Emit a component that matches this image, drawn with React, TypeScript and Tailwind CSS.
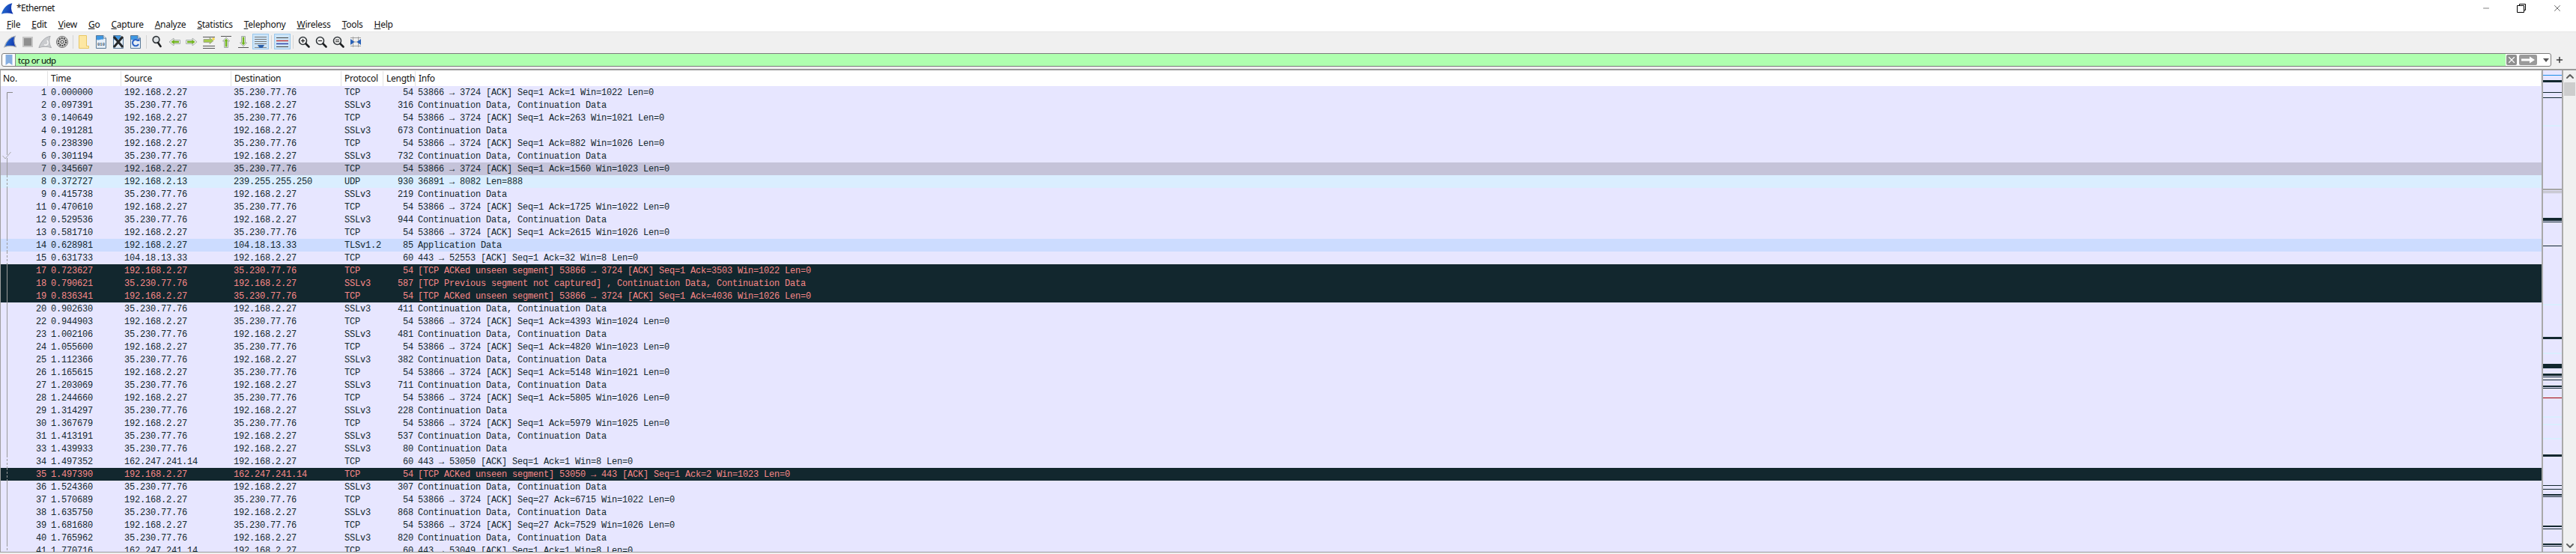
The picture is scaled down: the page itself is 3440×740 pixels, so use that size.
import type { ReactNode } from "react";
import { ChevronDown, ChevronUp, Minus, Plus, X } from "lucide-react";

type Mark = "none" | "first" | "line" | "dash" | "check";
type Tone = "tcp" | "udp" | "tls" | "sel" | "bad";
type Packet = { no: number; time: string; src: string; dst: string; proto: string; len: number; info: string; tone?: Tone; mark?: Mark };

const HOST = "192.168.2.27";
const PEER = "35.230.77.76";
const CC = "Continuation Data, Continuation Data";
const C = "Continuation Data";

const ack = (seq: number, a: number, win: number) => `53866 → 3724 [ACK] Seq=${seq} Ack=${a} Win=${win} Len=0`;
const up = (no: number, time: string, seq: number, a: number, win: number): Packet => ({ no, time, src: HOST, dst: PEER, proto: "TCP", len: 54, info: ack(seq, a, win) });
const down = (no: number, time: string, len: number, info: string): Packet => ({ no, time, src: PEER, dst: HOST, proto: "SSLv3", len, info });

const packets: Packet[] = [
  { ...up(1, "0.000000", 1, 1, 1022), mark: "first" },
  down(2, "0.097391", 316, CC),
  up(3, "0.140649", 1, 263, 1021),
  down(4, "0.191281", 673, C),
  up(5, "0.238390", 1, 882, 1026),
  { ...down(6, "0.301194", 732, CC), mark: "check" },
  { ...up(7, "0.345607", 1, 1560, 1023), tone: "sel" },
  { no: 8, time: "0.372727", src: "192.168.2.13", dst: "239.255.255.250", proto: "UDP", len: 930, info: "36891 → 8082 Len=888", tone: "udp", mark: "dash" },
  down(9, "0.415738", 219, C),
  up(11, "0.470610", 1, 1725, 1022),
  down(12, "0.529536", 944, CC),
  up(13, "0.581710", 1, 2615, 1026),
  { no: 14, time: "0.628981", src: HOST, dst: "104.18.13.33", proto: "TLSv1.2", len: 85, info: "Application Data", tone: "tls", mark: "dash" },
  { no: 15, time: "0.631733", src: "104.18.13.33", dst: HOST, proto: "TCP", len: 60, info: "443 → 52553 [ACK] Seq=1 Ack=32 Win=8 Len=0", mark: "dash" },
  { ...up(17, "0.723627", 1, 3503, 1022), info: `[TCP ACKed unseen segment] ${ack(1, 3503, 1022)}`, tone: "bad" },
  { ...down(18, "0.790621", 587, `[TCP Previous segment not captured] , ${CC}`), tone: "bad" },
  { ...up(19, "0.836341", 1, 4036, 1026), info: `[TCP ACKed unseen segment] ${ack(1, 4036, 1026)}`, tone: "bad" },
  down(20, "0.902630", 411, CC),
  up(22, "0.944903", 1, 4393, 1024),
  down(23, "1.002106", 481, CC),
  up(24, "1.055600", 1, 4820, 1023),
  down(25, "1.112366", 382, CC),
  up(26, "1.165615", 1, 5148, 1021),
  down(27, "1.203069", 711, CC),
  up(28, "1.244660", 1, 5805, 1026),
  down(29, "1.314297", 228, C),
  up(30, "1.367679", 1, 5979, 1025),
  down(31, "1.413191", 537, CC),
  down(33, "1.439933", 80, C),
  { no: 34, time: "1.497352", src: "162.247.241.14", dst: HOST, proto: "TCP", len: 60, info: "443 → 53050 [ACK] Seq=1 Ack=1 Win=8 Len=0", mark: "dash" },
  { no: 35, time: "1.497390", src: HOST, dst: "162.247.241.14", proto: "TCP", len: 54, info: "[TCP ACKed unseen segment] 53050 → 443 [ACK] Seq=1 Ack=2 Win=1023 Len=0", tone: "bad", mark: "dash" },
  down(36, "1.524360", 307, CC),
  up(37, "1.570689", 27, 6715, 1022),
  down(38, "1.635750", 868, CC),
  up(39, "1.681680", 27, 7529, 1026),
  down(40, "1.765962", 820, CC),
  { no: 41, time: "1.770716", src: "162.247.241.14", dst: HOST, proto: "TCP", len: 60, info: "443 → 53049 [ACK] Seq=1 Ack=1 Win=8 Len=0", mark: "dash" },
];

const toneClass: Record<Tone, string> = {
  tcp: "bg-[#e7e6ff] text-[#12272e]",
  udp: "bg-[#daeeff] text-[#12272e]",
  tls: "bg-[#ccdcff] text-[#12272e]",
  sel: "bg-[#c5c3d9] text-[#12272e]",
  bad: "bg-[#12272e] text-[#f78787]",
};

const menus: [string, string][] = [
  ["F", "ile"], ["E", "dit"], ["V", "iew"], ["G", "o"], ["C", "apture"], ["A", "nalyze"],
  ["S", "tatistics"], ["T", "elephony"], ["W", "ireless"], ["T", "ools"], ["H", "elp"],
];

const columns = "grid grid-cols-[63px_98px_147px_147px_56px_43px_1fr]";

// [y, height, colour] of the marks in the packet minimap, relative to its top
const minimapMarks: [number, number, string][] = [
  [6, 1, "#1a8fe8"], [13, 3, "#12272e"], [29, 1, "#12272e"], [36, 1, "#12272e"], [73, 2, "#daeeff"],
  [158, 2, "#a5a5a5"], [161, 1, "#b5b5b5"], [163, 1, "#b5b5b5"], [197, 4, "#12272e"], [202, 1, "#12272e"],
  [234, 1, "#12272e"], [312, 2, "#daeeff"], [356, 3, "#12272e"], [377, 2, "#daeeff"], [392, 6, "#12272e"],
  [405, 3, "#12272e"], [409, 1, "#12272e"], [413, 1, "#12272e"], [421, 2, "#12272e"], [424, 1, "#12272e"],
  [437, 1, "#a40000"], [462, 2, "#daeeff"], [472, 2, "#daeeff"], [491, 2, "#daeeff"], [513, 3, "#12272e"],
  [554, 1, "#12272e"], [559, 1, "#12272e"], [566, 2, "#12272e"], [569, 1, "#12272e"], [608, 2, "#12272e"],
  [612, 1, "#12272e"], [632, 2, "#12272e"], [635, 1, "#12272e"],
];

const FIN_PATH = "M1 18.5C4 10 9 3 18 1.5C15.5 7 16 13 19.5 18.5C13 16.5 7 16.5 1 18.5Z";

function Fin({ size = 20, outline = false }: { size?: number; outline?: boolean }) {
  const id = outline ? "finA" : "finB";
  return (
    <svg width={size} height={size} viewBox="0 0 20 20">
      <defs>
        <linearGradient id={id} x1="0" y1="0" x2="1" y2="0.3">
          <stop offset="0" stopColor="#2a7ad8" />
          <stop offset="1" stopColor="#1238b0" />
        </linearGradient>
      </defs>
      <path d={FIN_PATH} fill={`url(#${id})`} stroke={outline ? "#a6acb4" : "none"} strokeWidth={outline ? 1.4 : 0} />
    </svg>
  );
}

function Doc({ children }: { children: ReactNode }) {
  return (
    <svg width="18" height="18" viewBox="0 0 18 18">
      <path d="M2.5 0.5H12L15.5 4V17.5H2.5Z" fill="#e6eef7" stroke="#5a7a98" />
      <path d="M3 1H12V6C9 4.5 6 7.5 3 6Z" fill="#3f97e2" />
      <path d="M12 0.5V4H15.5" fill="#fff" stroke="#5a7a98" />
      {children}
    </svg>
  );
}

function Glass({ kind }: { kind: "find" | "in" | "out" | "fit" }) {
  if (kind === "find") {
    return (
      <svg width="20" height="20" viewBox="0 0 20 20" fill="none">
        <circle cx="8.5" cy="7" r="4.3" fill="#dfe3e6" stroke="#33383c" strokeWidth="1.7" />
        <path d="M11 11L14.5 16" stroke="#1d1f21" strokeWidth="2.6" strokeLinecap="round" />
      </svg>
    );
  }
  return (
    <svg width="20" height="20" viewBox="0 0 20 20" fill="none">
      <circle cx="8.5" cy="8.5" r="5" fill="#f4f4f4" stroke="#33383c" strokeWidth="1.6" />
      <path d="M12.5 12.5L16.5 16.5" stroke="#1d1f21" strokeWidth="2.6" strokeLinecap="round" />
      {kind !== "fit" && <path d="M6 8.5H11" stroke="#222" strokeWidth="1.2" />}
      {kind === "in" && <path d="M8.5 6V11" stroke="#222" strokeWidth="1.2" />}
      {kind === "fit" && <path d="M6 7.3H11M6 9.7H11" stroke="#222" strokeWidth="1" />}
    </svg>
  );
}

function Arrow({ dir }: { dir: "left" | "right" }) {
  return (
    <svg width="18" height="12" viewBox="0 0 18 12">
      <g transform={dir === "left" ? "" : "matrix(-1 0 0 1 18 0)"}>
        <path d="M2 6L8 1V3.5H16.5V8.5H8V11Z" fill="#eef1e8" stroke="#a8aeae" strokeLinejoin="round" />
        <path d="M4.5 6L8.5 3V4.8H15V7.2H8.5V9Z" fill="#6fb31c" />
      </g>
    </svg>
  );
}

function Vertical({ dir }: { dir: "top" | "bottom" }) {
  return (
    <svg width="20" height="20" viewBox="0 0 20 20">
      {dir === "top" ? (
        <>
          <path d="M3 2.5H17" stroke="#555" />
          <path d="M10 4L14.5 9H12.5V17.5H7.5V9H5.5Z" fill="#eef1e8" stroke="#a2a8a8" />
          <path d="M10 5.5L12.5 9H11.2V16.5H8.8V9H7.5Z" fill="#6fb31c" />
        </>
      ) : (
        <>
          <path d="M3 17.5H17" stroke="#555" />
          <path d="M10 16L14.5 11H12.5V2.5H7.5V11H5.5Z" fill="#eef1e8" stroke="#a2a8a8" />
          <path d="M10 14.5L12.5 11H11.2V3.5H8.8V11H7.5Z" fill="#6fb31c" />
        </>
      )}
    </svg>
  );
}

function Tool({ children, on }: { children: ReactNode; on?: boolean }) {
  return (
    <div className="flex h-[21px] w-[23px] shrink-0 items-center justify-center">
      <div className={`flex h-[21px] w-[22px] items-center justify-center ${on ? "border border-[#99c9ef] bg-[#cce4f7]" : ""}`}>{children}</div>
    </div>
  );
}

const Sep = () => (
  <div className="flex w-[6px] shrink-0 justify-center">
    <div className="h-[18px] w-px bg-[#d4d4d4]" />
  </div>
);

function Toolbar() {
  return (
    <div className="flex h-[26px] shrink-0 items-center border-t border-[#e6e6e6] bg-[#f0f0f0] pl-[2px]">
      <Tool><Fin size={17} outline /></Tool>
      <Tool>
        <svg width="20" height="20" viewBox="0 0 20 20"><rect x="4" y="4" width="12" height="12" fill="#8f8f8f" stroke="#c6c6c6" strokeWidth="2" /></svg>
      </Tool>
      <Tool>
        <svg width="18" height="18" viewBox="0 0 20 20">
          <path d={FIN_PATH} fill="#c9cbce" stroke="#a4a6a9" />
          <path d="M13 8A3.4 3.4 0 1 1 9 14" fill="none" stroke="#f8f8f8" strokeWidth="1.7" />
        </svg>
      </Tool>
      <Tool>
        <svg width="18" height="18" viewBox="0 0 18 18">
          <circle cx="9" cy="9" r="7.5" fill="#dcdcdc" stroke="#6b6b6b" />
          <circle cx="9" cy="9" r="5" fill="none" stroke="#3f3f3f" strokeWidth="2.2" strokeDasharray="2 1.1" />
          <circle cx="9" cy="9" r="2" fill="#f0f0f0" stroke="#333" />
        </svg>
      </Tool>
      <Sep />
      <Tool>
        <svg width="16" height="18" viewBox="0 0 16 18">
          <path d="M1.5 0.5H11.5V14.5H14.5V17.5H1.5Z" fill="#fde7a3" stroke="#e8c765" />
        </svg>
      </Tool>
      <Tool>
        <Doc>
          <text x="9" y="13.5" textAnchor="middle" fontSize="5.5" fontWeight="700" fontFamily="Liberation Mono, monospace" fill="#44586a">010</text>
        </Doc>
      </Tool>
      <Tool>
        <Doc>
          <path d="M3 2L15 16M15 2L3 16" stroke="#26282a" strokeWidth="3" />
        </Doc>
      </Tool>
      <Tool>
        <Doc>
          <path d="M12.5 7.5A4.2 4.2 0 1 0 13 12" fill="none" stroke="#2a62c4" strokeWidth="2" />
          <path d="M10 8H14.5V3.5Z" fill="#2a62c4" />
        </Doc>
      </Tool>
      <Sep />
      <Tool><Glass kind="find" /></Tool>
      <Tool><Arrow dir="left" /></Tool>
      <Tool><Arrow dir="right" /></Tool>
      <Tool>
        <svg width="20" height="20" viewBox="0 0 20 20">
          <path d="M2 3.5H18M2 15.5H18M2 18.5H18" stroke="#555" />
          <path d="M16 8.5L11 4.5V6.5H3V10.5H11V12.5Z" fill="#a5cc4d" stroke="#a3a890" />
          <circle cx="16" cy="6" r="1.8" fill="#f2d64b" />
        </svg>
      </Tool>
      <Tool><Vertical dir="top" /></Tool>
      <Tool><Vertical dir="bottom" /></Tool>
      <Tool on>
        <svg width="18" height="18" viewBox="0 0 18 18">
          <path d="M1 2.5H17M1 5.5H17M1 8.5H17M1 11.5H17" stroke="#777" />
          <path d="M1 16.5H17" stroke="#888" />
          <path d="M5 13H14L11.5 17H7.5Z" fill="#2a5fa8" />
        </svg>
      </Tool>
      <Sep />
      <Tool on>
        <svg width="18" height="18" viewBox="0 0 18 18">
          <path d="M1 3.5H17" stroke="#444" />
          <path d="M1 7.5H17" stroke="#c43434" strokeWidth="1.4" />
          <path d="M1 11.5H17" stroke="#2a3fa8" strokeWidth="1.4" />
          <path d="M1 15.5H17" stroke="#444" />
        </svg>
      </Tool>
      <Sep />
      <Tool><Glass kind="in" /></Tool>
      <Tool><Glass kind="out" /></Tool>
      <Tool><Glass kind="fit" /></Tool>
      <Tool>
        <svg width="16" height="16" viewBox="0 0 16 16">
          <path d="M1 2.5H15M1 13.5H15M1 8H15M4.5 1V15M11.5 1V15" stroke="#a0a0a0" />
          <path d="M1 4L6.5 8L1 12ZM15 4L9.5 8L15 12Z" fill="#2a62b8" />
        </svg>
      </Tool>
    </div>
  );
}

function FilterBar() {
  return (
    <div className="flex h-[24px] shrink-0 items-center bg-[#f0f0f0] pl-[2px]">
      <div className="flex h-[18px] w-[3405px] overflow-hidden rounded-[3px] border border-[#7a7a7a] bg-white">
        <div className="flex w-[18px] shrink-0 items-center justify-center border-r border-[#8a8a8a]">
          <svg width="10" height="14" viewBox="0 0 10 14"><path d="M0.5 0H9.5V14L5 11L0.5 14Z" fill="#86aee0" /></svg>
        </div>
        <div className="flex-1 bg-[#afffaf] pl-[3px] pt-px text-[11.5px] leading-[16px] tracking-[-0.5px] text-black">tcp or udp</div>
        <div className="flex w-[60px] shrink-0 items-center pl-[1px]">
          <div className="flex h-[14px] w-[14px] items-center justify-center rounded-[2px] bg-[#8f8f8f]">
            <X className="h-[14px] w-[14px] text-white" strokeWidth={2} />
          </div>
          <div className="ml-[3px] flex h-[14px] w-[24px] items-center justify-center rounded-[2px] bg-[#9a9a9a]">
            <svg width="20" height="10" viewBox="0 0 20 10"><path d="M1 3.5H12V0.5L19 5L12 9.5V6.5H1Z" fill="#fff" /></svg>
          </div>
          <svg className="ml-[8px]" width="8" height="5" viewBox="0 0 8 5"><path d="M0 0H8L4 5Z" fill="#555" /></svg>
        </div>
      </div>
      <Plus className="ml-[5px] h-[12px] w-[12px] text-[#3c3c3c]" strokeWidth={3} />
    </div>
  );
}

function RelatedMark({ mark }: { mark: Mark }) {
  return (
    <svg className="shrink-0" width="19" height="17" viewBox="0 0 19 17" fill="none">
      {mark === "first" && <path d="M8.5 17V8.5H16" stroke="#8a8a8a" />}
      {mark === "line" && <path d="M8.5 0V17" stroke="#9a9a9a" />}
      {mark === "dash" && <path d="M8.5 0V17" stroke="#9a9a9a" strokeDasharray="3 2" />}
      {mark === "check" && (
        <>
          <path d="M8.5 0V7" stroke="#9a9a9a" />
          <path d="M2.5 8L6 12L13.5 3" stroke="#a8a8a8" />
          <path d="M8.5 11V17" stroke="#9a9a9a" />
        </>
      )}
    </svg>
  );
}

function PacketRow({ p }: { p: Packet }) {
  return (
    <div className={`${columns} h-[17px] shrink-0 overflow-hidden whitespace-pre leading-[19px] ${toneClass[p.tone ?? "tcp"]}`}>
      <div className="flex pr-[2px]">
        <RelatedMark mark={p.mark ?? "line"} />
        <span className="flex-1 text-right">{p.no}</span>
      </div>
      <div className="pl-[4px]">{p.time}</div>
      <div className="pl-[4px]">{p.src}</div>
      <div className="pl-[3px]">{p.dst}</div>
      <div className="pl-[4px]">{p.proto}</div>
      <div className="pr-[3px] text-right">{p.len}</div>
      <div className="pl-[3px]">{p.info}</div>
    </div>
  );
}

function PacketList() {
  const heads = ["No.", "Time", "Source", "Destination", "Protocol", "Length", "Info"];
  return (
    <div className="flex min-h-0 flex-1 overflow-hidden">
      <div className="flex w-[3394px] shrink-0 flex-col overflow-hidden border-l border-[#a0a0a0] bg-white">
        <div className={`${columns} h-[21px] shrink-0 bg-white pt-px text-[12px] leading-[20px] tracking-[-0.25px] text-[#111]`}>
          {heads.map((h, i) => (
            <div key={h} className={`border-r border-[#e3e3e3] ${i === 0 ? "pl-[3px]" : "pl-[4px]"}`}>{h}</div>
          ))}
        </div>
        <div className="flex flex-col font-['Liberation_Mono',monospace] text-[12px] tracking-[-0.2px]">
          {packets.map((p) => (
            <PacketRow key={p.no} p={p} />
          ))}
        </div>
      </div>
      <div className="w-[29px] shrink-0 border-x-2 border-[#a9a9a9] bg-[#e7e6ff]">
        <svg width="25" height="643" viewBox="0 0 25 643">
          {minimapMarks.map(([y, h, fill]) => (
            <rect key={y} x="0" y={y} width="25" height={h} fill={fill} />
          ))}
        </svg>
      </div>
      <div className="flex w-[17px] shrink-0 flex-col items-center bg-[#f0f0f0]">
        <ChevronUp className="h-[16px] w-[16px] text-[#606060]" strokeWidth={3} />
        <div className="h-[18px] w-[15px] bg-[#cdcdcd]" />
        <div className="flex-1" />
        <ChevronDown className="h-[16px] w-[16px] text-[#606060]" strokeWidth={3} />
      </div>
    </div>
  );
}

export default function App() {
  return (
    <div className="flex h-[740px] w-[3440px] flex-col overflow-hidden bg-[#f0f0f0] font-['Noto_Sans',sans-serif] text-[12px]">
      <div className="flex h-[22px] shrink-0 items-center bg-white pl-[1px]">
        <Fin size={17} />
        <span className="ml-[4px] text-[12px] tracking-[-0.5px] text-[#111]">*Ethernet</span>
        <div className="ml-auto flex items-center">
          <Minus className="mr-[35px] h-[12px] w-[12px] text-black" strokeWidth={1} />
          <svg className="mr-[35px]" width="12" height="12" viewBox="0 0 12 12" fill="none">
            <path d="M3.5 2.5V0.5H11.5V8.5H9.5M0.5 2.5H9.5V11.5H0.5Z" stroke="#000" />
          </svg>
          <X className="mr-[18px] h-[14px] w-[14px] text-black" strokeWidth={1} />
        </div>
      </div>
      <div className="flex h-[20px] shrink-0 items-center gap-[15px] bg-white pl-[9px] pt-[2px] text-[12px] tracking-[-0.25px] text-[#111]">
        {menus.map(([k, rest]) => (
          <span key={k + rest}><span className="underline">{k}</span>{rest}</span>
        ))}
      </div>
      <Toolbar />
      <FilterBar />
      <div className="h-[2px] shrink-0 bg-[#9a9a9a]" />
      <PacketList />
      <div className="h-px shrink-0 bg-[#9a9a9a]" />
      <div className="h-[2px] shrink-0 bg-[#f0f0f0]" />
    </div>
  );
}
